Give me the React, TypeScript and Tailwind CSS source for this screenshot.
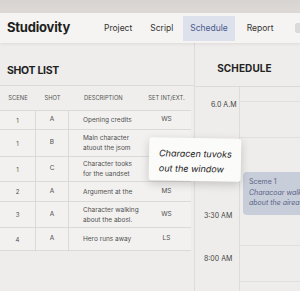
import React from "react";

const rows = [
  { scene: "1", shot: "A", desc: ["Opening credits"], set: "WS", h: "h-[19px]" },
  { scene: "1", shot: "B", desc: ["Main character", "atuout the jsom"], set: "", h: "h-[27px]" },
  { scene: "1", shot: "C", desc: ["Character tooks", "for the uandset"], set: "", h: "h-[25px]" },
  { scene: "2", shot: "A", desc: ["Argument at the"], set: "MS", h: "h-[20px]" },
  { scene: "3", shot: "A", desc: ["Character walking", "about the abosl."], set: "WS", h: "h-[26px]" },
  { scene: "4", shot: "A", desc: ["Hero runs away"], set: "LS", h: "h-[23px]" },
];

const nav = ["Project", "Scripl", "Schedule", "Report"];

export default function App() {
  return (
    <div className="relative w-[300px] h-[291px] overflow-hidden bg-[#eeedeb] font-['Inter','Liberation_Sans',sans-serif] text-[#2a2a2a]">
      {/* top band */}
      <div className="h-[13px] bg-gradient-to-b from-[#d6d3d1] to-[#dddad8]" />

      {/* app header */}
      <header className="h-[30px] flex items-center bg-[#f5f4f2] shadow-[0_1px_3px_rgba(0,0,0,0.08)] relative z-10">
        <div className="pl-[7px] w-[96px] shrink-0 text-[13px] font-bold tracking-[-0.2px] text-[#1f1f1f]">
          Studiovity
        </div>
        <nav className="flex items-center h-full text-[8.5px] text-[#333]">
          {nav.map((n) =>
            n === "Schedule" ? (
              <div
                key={n}
                className="h-[25px] px-[7px] flex items-center bg-[#dde1ec] text-[#4b5a8c] mr-[4px]"
              >
                {n}
              </div>
            ) : (
              <div key={n} className="px-[8px] mr-[2px]">
                {n}
              </div>
            )
          )}
        </nav>
        <div className="ml-auto w-[5px] h-[10px] bg-[#dcdad8] rounded-l-[2px]" />
      </header>

      {/* body */}
      <div className="flex h-[248px]">
        {/* shot list */}
        <section className="w-[195px] shrink-0 border-r border-[#dedcda] flex flex-col">
          <div className="h-[43px] border-b border-[#dcdad8] pl-[7px] pt-[20px] text-[10.5px] font-bold tracking-[-0.3px] text-[#222]">
            SHOT LIST
          </div>
          <div className="mr-[3px] text-[6.5px] text-[#505050]">
            <div className="flex h-[25px] items-center border-b border-[#dcdad8] bg-[#efeeec] text-[5.8px] text-[#555]">
              <div className="w-[36px] text-center">SCENE</div>
              <div className="w-[33px] text-center">SHOT</div>
              <div className="w-[73px] pl-[15px]">DESCRIPTION</div>
              <div className="flex-1 text-center">SET INT/EXT.</div>
            </div>
            {rows.map((r, i) => (
              <div
                key={i}
                className={`flex ${r.h} border-b border-[#dcdad8] bg-[#f2f1ef]`}
              >
                <div className="w-[36px] flex items-center justify-center border-r border-[#dcdad8] text-[6px]">
                  {r.scene}
                </div>
                <div className="w-[33px] flex items-center justify-center border-r border-[#dcdad8]">
                  {r.shot}
                </div>
                <div className="w-[73px] pl-[14px] flex flex-col justify-center leading-[10px] whitespace-nowrap">
                  {r.desc.map((d) => (
                    <span key={d}>{d}</span>
                  ))}
                </div>
                <div className="flex-1 flex items-center justify-center">
                  {r.set}
                </div>
              </div>
            ))}
          </div>
        </section>

        {/* schedule */}
        <section className="flex-1 min-w-0 flex flex-col">
          <div className="h-[44px] border-b border-[#dcdad8] flex items-center justify-center pr-[6px] pt-[7px] text-[10px] font-bold tracking-[0.1px] text-[#222]">
            SCHEDULE
          </div>
          <div className="flex flex-1">
            <div className="w-[45px] shrink-0 border-r border-[#dedcda] text-[7px] text-[#444] flex flex-col">
              <div className="h-[34px] pt-[13px] pl-[16px] whitespace-nowrap">6.0 A.M</div>
              <div className="h-[90px]" />
              <div className="h-[43px] pl-[9px] whitespace-nowrap">3:30 AM</div>
              <div className="pl-[9px] whitespace-nowrap">8:00 AM</div>
            </div>
            <div className="flex-1 min-w-0 flex flex-col">
              <div className="h-[15px] border-b border-[#e2e0de]" />
              <div className="h-[36px] border-b border-[#e2e0de]" />
              <div className="h-[108px] border-b border-[#e2e0de] pt-[34px] pl-[3px]">
                <div className="h-[43px] rounded-l-[4px] bg-[#c8cdda] pl-[6px] pt-[5px] text-[7px] leading-[10.5px] text-[#5a6485] whitespace-nowrap overflow-hidden">
                  <div>Sceme 1</div>
                  <div className="italic">Characoar walks</div>
                  <div className="italic">about the aireau.</div>
                </div>
              </div>
              <div className="h-[36px] border-b border-[#e2e0de]" />
            </div>
          </div>
        </section>
      </div>

      {/* popover */}
      <div className="absolute left-[149px] top-[138px] w-[92px] h-[43px] bg-[#fbfbfa] rounded-[3px] shadow-[0_3px_10px_rgba(0,0,0,0.18)] pl-[10px] pt-[8px] text-[9px] leading-[15px] italic text-[#222] rotate-[1deg]">
        <div>Characen tuvoks</div>
        <div>out the window</div>
      </div>
    </div>
  );
}
